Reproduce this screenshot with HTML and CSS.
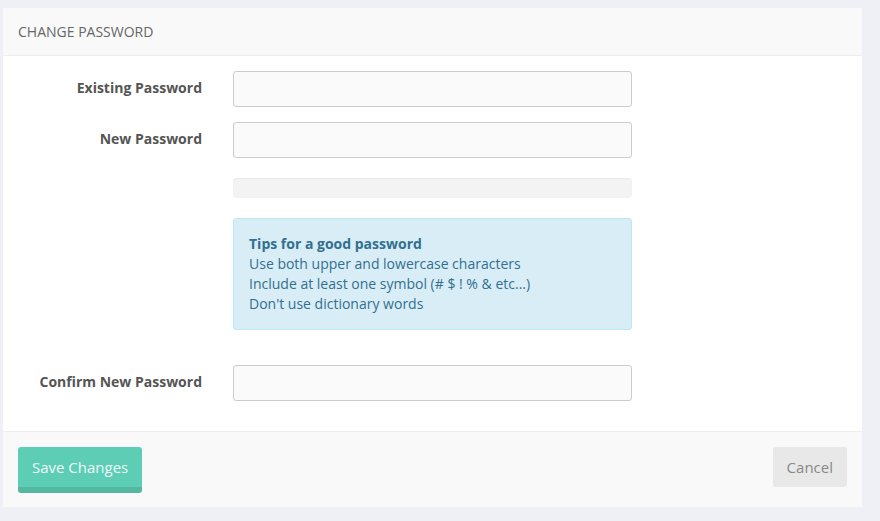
FILE: index.html
```html
<!DOCTYPE html>
<html>
<head>
<meta charset="utf-8">
<link rel="stylesheet" href="styles.css">
</head>
<body>
<div class="panel">
  <div class="panel-heading">CHANGE PASSWORD</div>
  <div class="panel-body">
    <label class="label">Existing Password</label>
    <input class="input" type="password">
    <label class="label">New Password</label>
    <input class="input" type="password">
    <div class="spacer"></div>
    <div class="strength"></div>
    <div class="spacer"></div>
    <div class="alert">
      <strong>Tips for a good password</strong><br>
      Use both upper and lowercase characters<br>
      Include at least one symbol (# $ ! % &amp; etc...)<br>
      Don't use dictionary words
    </div>
    <label class="label confirm">Confirm New Password</label>
    <input class="input confirm" type="password">
  </div>
  <div class="panel-footer">
    <button class="btn btn-save">Save Changes</button>
    <button class="btn btn-cancel">Cancel</button>
  </div>
</div>
</body>
</html>
```

FILE: styles.css
```css
* { box-sizing: border-box; }
html, body { margin: 0; padding: 0; }
body {
  background: #eef0f5;
  font-family: "Open Sans", "Liberation Sans", sans-serif;
  font-size: 14px;
  color: #555;
  height: 521px;
  overflow: hidden;
}
.panel {
  margin: 8px 0 0 3px;
  width: 859px;
  background: #fff;
}
.panel-heading {
  height: 48px;
  padding: 0 15px 1px;
  display: flex;
  align-items: center;
  background: #f9f9f9;
  border-bottom: 1px solid #eee;
  color: #666;
  font-size: 14px;
}
.panel-body {
  padding: 15px 15px 30px;
  display: grid;
  grid-template-columns: 184px 399px;
  column-gap: 31px;
  row-gap: 15px;
  align-items: center;
}
.label {
  text-align: right;
  font-weight: bold;
  color: #555;
  font-size: 14px;
  padding-bottom: 4px;
}
.input {
  height: 36px;
  border: 1px solid #ccc;
  border-radius: 3px;
  background: #fafafa;
  width: 399px;
  margin: 0;
}
.strength {
  height: 20px;
  background: #f3f3f3;
  border-radius: 4px;
  box-shadow: inset 0 1px 1px rgba(0,0,0,0.04);
  margin-top: 5px;
}
.alert {
  grid-column: 2;
  margin-top: 5px;
  background: #d9edf7;
  border: 1px solid #bce8f1;
  border-radius: 3px;
  color: #31708f;
  padding: 15px 15px 15px;
  line-height: 20px;
  font-size: 14px;
}
.alert strong { font-weight: bold; }
.label.confirm, .input.confirm { margin-top: 20px; }
.panel-footer {
  background: #f9f9f9;
  border-top: 1px solid #eee;
  padding: 15px 15px 14px;
  display: flex;
  justify-content: space-between;
  align-items: flex-start;
}
.btn {
  font-family: "Open Sans", "Liberation Sans", sans-serif;
  font-size: 15px;
  border: none;
  border-radius: 3px;
  height: 40px;
  padding: 0 14px;
  cursor: pointer;
}
.btn-save {
  background: #5dcdb6;
  color: #eef9f6;
  height: 46px;
  border-bottom: 6px solid #52b8a2;
}
.btn-cancel {
  background: #e8e8e8;
  color: #888;
}
```
